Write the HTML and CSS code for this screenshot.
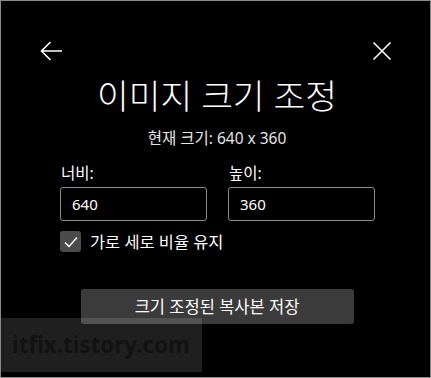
FILE: index.html
```html
<!DOCTYPE html>
<html lang="ko">
    <head>
        <meta charset="utf-8">
        <link rel="stylesheet" href="styles.css">
    </head>
    <body>
        <div class="dialog">
            <div class="top">
                <span class="iconBtn">
                    <svg width="23" height="22" viewBox="0 0 23 22">
                        <path d="M22 11H1.5M10.5 2 1.5 11l9 9" fill="none" stroke="#fff" stroke-width="1.6"/>
                    </svg>
                </span>
                <span class="iconBtn">
                    <svg width="20" height="20" viewBox="0 0 20 20">
                        <path d="M1.5 1.5l17 17M18.5 1.5l-17 17" fill="none" stroke="#fff" stroke-width="1.6"/>
                    </svg>
                </span>
            </div>

            <h1 class="title">이미지 크기 조정</h1>
            <p class="current">현재 크기: 640 x 360</p>

            <div class="fields">
                <div class="field">
                    <label>너비:</label>
                    <div class="box">640</div>
                </div>
                <div class="field">
                    <label>높이:</label>
                    <div class="box">360</div>
                </div>
            </div>

            <div class="keep">
                <span class="check">
                    <svg width="14" height="12" viewBox="0 0 14 12">
                        <path d="M1 6.5l4 4L13 1.5" fill="none" stroke="#fff" stroke-width="1.5"/>
                    </svg>
                </span>
                가로 세로 비율 유지
            </div>

            <div class="actions">
                <span class="saveBtn">크기 조정된 복사본 저장</span>
            </div>

            <div class="mark">itfix.tistory.com</div>
        </div>
    </body>
</html>
```

FILE: styles.css
```css
*{
    margin:0;
    padding:0;
    box-sizing: border-box;
}
body{
    background: #000;
    font-family: "Noto Sans", "Noto Sans CJK KR", sans-serif;
    color: #fff;
}
.dialog{
    width: 431px;
    height: 378px;
    border: 1px solid #8a8a8a;
    background: #000;
    position: relative;
    overflow: hidden;
}
.top{
    height: 61px;
    padding: 39px 38px 0 39px;
    display: flex;
    justify-content: space-between;
    align-items: flex-start;
}
.iconBtn{
    display: flex;
}
.iconBtn svg{
    display: block;
}
.top .iconBtn:last-child{
    margin-top: 1px;
}
.title{
    margin-top: 14px;
    font-size: 34.5px;
    font-weight: 300;
    line-height: 40px;
    text-align: center;
    padding-left: 3px;
}
.current{
    margin-top: 12px;
    font-size: 15.5px;
    line-height: 20px;
    text-align: center;
    color: #e6e6e6;
    padding-left: 3px;
}
.fields{
    margin: 15px 0 0 59px;
    width: 315px;
    display: grid;
    grid-template-columns: 147px 147px;
    column-gap: 21px;
}
.field label{
    display: block;
    font-size: 15.5px;
    line-height: 20px;
    padding-left: 1px;
}
.box{
    margin-top: 4px;
    height: 34px;
    border: 1px solid #8c8c8c;
    border-radius: 3px;
    padding-left: 11px;
    font-size: 15px;
    line-height: 32px;
}
.keep{
    margin: 10px 0 0 59px;
    display: flex;
    align-items: center;
    gap: 9px;
    font-size: 16.4px;
    line-height: 21px;
}
.check{
    width: 21px;
    height: 21px;
    border-radius: 3px;
    background: #4b4b4b;
    display: flex;
    align-items: center;
    justify-content: center;
}
.actions{
    margin-top: 37px;
    display: flex;
    justify-content: center;
    padding-left: 3px;
}
.saveBtn{
    width: 273px;
    height: 35px;
    border-radius: 3px;
    background: #3b3b3b;
    font-size: 16.5px;
    line-height: 35px;
    text-align: center;
}
.mark{
    position: absolute;
    left: 0;
    top: 317px;
    width: 201px;
    height: 54px;
    background: rgba(255,255,255,0.12);
    color: #121212;
    font-family: "Noto Sans", sans-serif;
    font-weight: bold;
    font-size: 22.4px;
    line-height: 54px;
    padding-left: 11px;
}
```
